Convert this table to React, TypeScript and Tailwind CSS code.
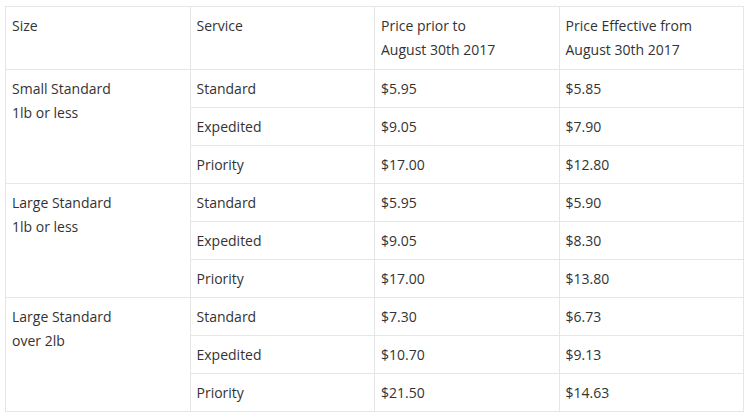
import React from 'react';

type Group = {
  size: string[];
  rows: { service: string; prior: string; current: string }[];
};

const groups: Group[] = [
  {
    size: ['Small Standard', '1lb or less'],
    rows: [
      { service: 'Standard', prior: '$5.95', current: '$5.85' },
      { service: 'Expedited', prior: '$9.05', current: '$7.90' },
      { service: 'Priority', prior: '$17.00', current: '$12.80' },
    ],
  },
  {
    size: ['Large Standard', '1lb or less'],
    rows: [
      { service: 'Standard', prior: '$5.95', current: '$5.90' },
      { service: 'Expedited', prior: '$9.05', current: '$8.30' },
      { service: 'Priority', prior: '$17.00', current: '$13.80' },
    ],
  },
  {
    size: ['Large Standard', 'over 2lb'],
    rows: [
      { service: 'Standard', prior: '$7.30', current: '$6.73' },
      { service: 'Expedited', prior: '$10.70', current: '$9.13' },
      { service: 'Priority', prior: '$21.50', current: '$14.63' },
    ],
  },
];

const cell = 'border border-[#e6e6e6] px-[6px] py-[6.5px] align-top text-left font-normal';

export default function App() {
  return (
    <div className="bg-white min-h-[418px] pl-[5px] pt-[6px] pr-[8px] font-['Open_Sans',sans-serif] text-[14px] leading-6 text-[#333]">
      <table className="w-[739px] table-fixed border-collapse">
        <thead>
          <tr>
            <th className={`${cell} py-[7px]`}>Size</th>
            <th className={`${cell} py-[7px]`}>Service</th>
            <th className={`${cell} py-[7px]`}>
              Price prior to
              <br />
              August 30th 2017
            </th>
            <th className={`${cell} py-[7px]`}>
              Price Effective from
              <br />
              August 30th 2017
            </th>
          </tr>
        </thead>
        <tbody>
          {groups.map((g) =>
            g.rows.map((r, i) => (
              <tr key={g.size.join() + r.service}>
                {i === 0 && (
                  <td rowSpan={3} className={cell}>
                    {g.size[0]}
                    <br />
                    {g.size[1]}
                  </td>
                )}
                <td className={cell}>{r.service}</td>
                <td className={cell}>{r.prior}</td>
                <td className={cell}>{r.current}</td>
              </tr>
            ))
          )}
        </tbody>
      </table>
    </div>
  );
}
